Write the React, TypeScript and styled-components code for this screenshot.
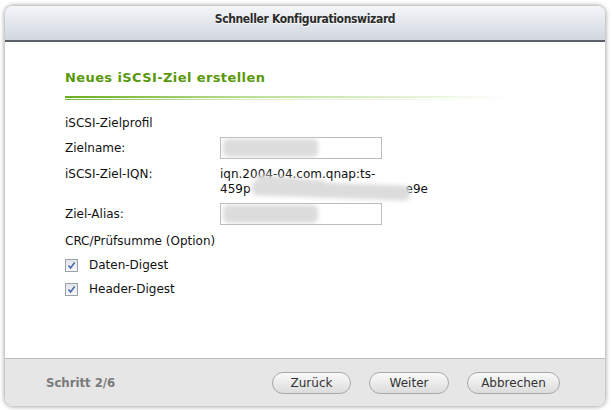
import {type FC, type ReactNode} from 'react';
import styled, {createGlobalStyle} from 'styled-components';

const GlobalStyle = createGlobalStyle`
    html, body {
        margin: 0;
        padding: 0;
        background: #ffffff;
    }
    body {
        font-family: "DejaVu Sans", Verdana, sans-serif;
        font-size: 12px;
        color: #111;
    }
`;

const Page = styled.div`
    width: 612px;
    height: 410px;
    padding: 6px 0 0 5px;
    box-sizing: border-box;
`;

const Window = styled.div`
    width: 600px;
    height: 400px;
    display: flex;
    flex-direction: column;
    background: #fff;
    border-radius: 8px;
    box-shadow: 0 0 4px 1px rgba(0, 0, 0, 0.35);
    overflow: hidden;
`;

const Header = styled.div`
    height: 36px;
    box-sizing: border-box;
    padding-bottom: 8px;
    flex: none;
    display: flex;
    align-items: center;
    justify-content: center;
    background: linear-gradient(#f4f6f9, #d2d7df);
    border-bottom: 2px solid #5c6068;
    font-family: "DejaVu Sans Condensed", "DejaVu Sans", sans-serif;
    font-weight: bold;
    font-size: 12px;
    letter-spacing: -0.35px;
    color: #2b2b2b;
    text-shadow: 0 1px 0 #fff;
`;

const Content = styled.div`
    flex: 1;
    padding: 28px 0 0 60px;
    display: flex;
    flex-direction: column;
`;

const SectionTitle = styled.div`
    font-weight: bold;
    font-size: 13px;
    letter-spacing: 0.4px;
    line-height: 16px;
    color: #58990a;
    padding-bottom: 10px;
`;

const Underline = styled.div`
    width: 445px;
    height: 4px;
    border-top: 2px solid transparent;
    border-image: linear-gradient(90deg, #6aae1c 0%, #b8de90 40%, rgba(255, 255, 255, 0) 100%) 1;
    position: relative;
    &::after {
        content: '';
        position: absolute;
        left: 0;
        right: 0;
        top: 1px;
        height: 1px;
        background: linear-gradient(90deg, #7bb83a 0%, #d7ebc0 40%, rgba(255, 255, 255, 0) 100%);
    }
`;

const Row = styled.div<{ $top: number; $h?: number; $start?: boolean }>`
    display: flex;
    align-items: ${p => (p.$start ? 'flex-start' : 'center')};
    margin-top: ${p => p.$top}px;
    min-height: ${p => p.$h ?? 22}px;
`;

const Label = styled.div`
    width: 155px;
    flex: none;
    line-height: 15px;
`;

const Value = styled.div`
    position: relative;
    line-height: 15px;
`;

const Gap = styled.span<{ $w: number }>`
    display: inline-block;
    width: ${p => p.$w}px;
`;

const Input = styled.div`
    position: relative;
    width: 160px;
    height: 20px;
    border: 1px solid #bdbdbd;
    background: #fff;
    overflow: hidden;
`;

const Smudge = styled.span<{ $l: number; $t: number; $w: number; $h: number; $r?: number }>`
    position: absolute;
    left: ${p => p.$l}px;
    top: ${p => p.$t}px;
    width: ${p => p.$w}px;
    height: ${p => p.$h}px;
    background: #dcdcdc;
    border-radius: 5px;
    filter: blur(2px);
    transform: rotate(${p => p.$r ?? 0}deg);
`;

const CheckLabel = styled.label`
    display: flex;
    align-items: center;
    gap: 11px;
`;

const Box = styled.span`
    width: 11px;
    height: 11px;
    border: 1px solid #98a2ad;
    background: linear-gradient(#e1e4e8, #f6f7f8);
    display: flex;
    align-items: center;
    justify-content: center;
`;

const Footer = styled.div`
    height: 47px;
    flex: none;
    border-top: 1px solid #bcbcbc;
    background: #e6e6e6;
    display: flex;
    align-items: center;
    padding: 0 45px 0 41px;
`;

const Step = styled.div`
    flex: 1;
    font-family: "DejaVu Sans Condensed", "DejaVu Sans", sans-serif;
    font-weight: bold;
    font-size: 13px;
    color: #7a7a7a;
`;

const Buttons = styled.div`
    display: flex;
    gap: 18px;
`;

const Button = styled.button<{ $w: number }>`
    width: ${p => p.$w}px;
    height: 22px;
    border: 1px solid #a9a9a9;
    border-radius: 11px;
    background: linear-gradient(#fafafa, #dcdcdc);
    font-family: "DejaVu Sans", Verdana, sans-serif;
    font-size: 12px;
    color: #333;
    padding: 0;
`;

const Check: FC<{ children: ReactNode }> = ({children}) => (
    <CheckLabel>
        <Box>
            <svg width="9" height="9" viewBox="0 0 9 9">
                <path d="M1.5 4.5 L3.6 7 L7.6 1.5" fill="none" stroke="#4a66b0" strokeWidth="1.5"/>
            </svg>
        </Box>
        {children}
    </CheckLabel>
);

export default function App() {
    return (
        <>
            <GlobalStyle/>
            <Page>
                <Window>
                    <Header>Schneller Konfigurationswizard</Header>
                    <Content>
                        <SectionTitle>Neues iSCSI-Ziel erstellen</SectionTitle>
                        <Underline/>
                        <Row $top={10}>
                            <Label>iSCSI-Zielprofil</Label>
                        </Row>
                        <Row $top={3}>
                            <Label>Zielname:</Label>
                            <Input><Smudge $l={2} $t={1} $w={95} $h={18}/></Input>
                        </Row>
                        <Row $top={8} $h={30} $start>
                            <Label>iSCSI-Ziel-IQN:</Label>
                            <Value>
                                iqn.2004-04.com.qnap:ts-<br/>459p<Gap $w={155}/>e9e
                                <Smudge $l={36} $t={11} $w={70} $h={8} $r={6}/>
                                <Smudge $l={32} $t={16} $w={158} $h={15} $r={2}/>
                            </Value>
                        </Row>
                        <Row $top={6}>
                            <Label>Ziel-Alias:</Label>
                            <Input><Smudge $l={2} $t={1} $w={95} $h={18}/></Input>
                        </Row>
                        <Row $top={5}>
                            <Label>CRC/Prüfsumme (Option)</Label>
                        </Row>
                        <Row $top={2}>
                            <Check>Daten-Digest</Check>
                        </Row>
                        <Row $top={2}>
                            <Check>Header-Digest</Check>
                        </Row>
                    </Content>
                    <Footer>
                        <Step>Schritt 2/6</Step>
                        <Buttons>
                            <Button $w={79}>Zurück</Button>
                            <Button $w={80}>Weiter</Button>
                            <Button $w={93}>Abbrechen</Button>
                        </Buttons>
                    </Footer>
                </Window>
            </Page>
        </>
    );
}
